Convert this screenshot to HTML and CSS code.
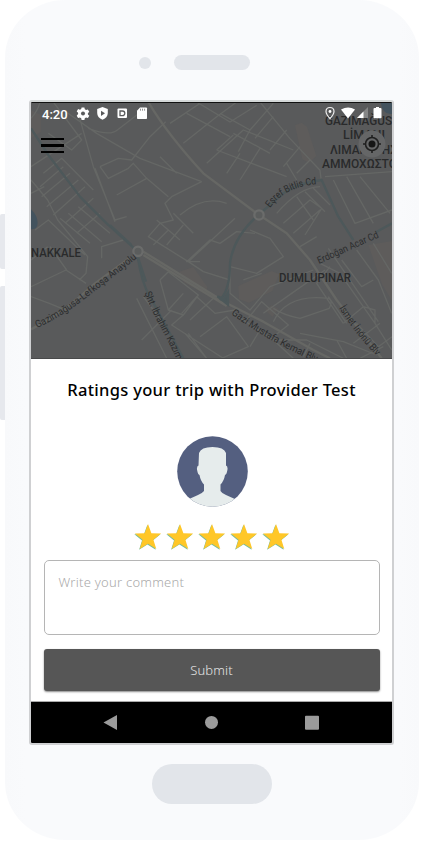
FILE: index.html
```html
<!DOCTYPE html>
<html lang="en">
<head>
<meta charset="utf-8">
<title>Rate your trip</title>
<link rel="stylesheet" href="styles.css">
</head>
<body>
<div class="stage">
  <div class="side-keys"><i class="key key-short"></i><i class="key key-long"></i></div>
  <main class="phone">
    <div class="earpiece"><i class="camera"></i><i class="speaker"></i></div>
    <div class="screen">
      <section class="map">
        <svg class="map-art" viewBox="31 103 361 256">
          <rect x="31" y="102" width="361" height="257" fill="#595a5b"/>
          <g transform="scale(.33333)">
            <g fill="#5e5c5b">
              <path d="M885 376l20-8 16 12 28 88-22 20-20-10z"/>
              <path d="M715 858l100-45 22 10-20 50-70 35-30-10z"/>
              <path d="M538 815l42-14 42 60-6 22-65-36z"/>
              <path d="M1105 735l71-12v180l-30-50z"/>
              <path d="M795 930l20-14 20 10-18 24z"/>
              <path d="M93 330l30 15v50l-30 20z"/>
            </g>
            <path d="M93 628q20 20 20 40 0 20-20 20zM1142 306h34v36q-28 4-34-36z" fill="#43535e"/>
            <g class="road">
              <path d="M93 355Q115 330 120 306M160 306L245 420 215 450 145 400M93 500L245 400M235 340L280 500 345 660 380 650M190 330L290 400 420 475 605 545M265 385Q330 410 352 390L430 330M300 500L355 475 395 480 450 410 497 365M300 500l25 35 60-30 15-15 40 45-90 50M440 535l65 55M480 470l50 50M345 665l-60-160"/>
              <path d="M93 540l50 60 30 60 90 110-5 50-20 20M130 520l55-45 95 95M120 560l70-60M125 590l85-70M140 620l95-80M160 645l95-85M195 670l85-75M230 700l70-60M93 580l40-20M105 690l40-30 110 105M180 655l90 75M205 640l100 85M235 620l95 80M305 775v-35l65-20M93 780l50-40M93 860l105-50 60 40M93 890l55 20 60 25M150 740l50 70"/>
              <path d="M510 370l90-60M550 430l100-80 60-44M560 340l130 70M590 306l100 60 80-50M620 490l110-100 150 60M650 450l210 80M680 520l40-60M720 540l60-95M660 340l90 50 70-80M750 390l-35 65M780 306l90 110 90 95 3 25M820 350l-55 65M860 390l-50 60M900 440l-50 60M930 480l-40 40M860 490l30 50M700 405l-50 45M700 400l110 60"/>
              <path d="M605 545l-90 45-20 20 25 50-40 10-35 40 120 75 140-130M470 660l70 60M520 640l60 60M505 690l-45 45M550 675l-50 60M600 785l-40 0 70-65 30 10 50-35 55 5M565 785l45 30 80 25M540 645q70-60 140-35"/>
              <path d="M480 840l25-25 90 70-45 60-45-15-25-90M505 930l45-50M545 940l45-50 55 50 60-10M550 945l-35 30 155 100M515 930l-90 90M570 960l70-65M600 1010l80-60 65 90-80 35M620 1075l-55-75M555 1000l65 75M410 895l90 180M430 890l60 80"/>
              <path d="M690 800l80 20 80-50-40-55-60-25M690 800v80l60 50 60-70 130-50M730 840l55-20M740 960l45-55 80 70-45 35M790 940l85-60 100-70M820 965Q860 880 985 895 1000 900 988 925L900 955Q850 945 820 925M985 890l55 80M990 800l-40 50 80 120M700 940l120 80 100 0 110 55M820 1020l60 55M900 1000l130 25 100 40M930 1030l-20 40M780 990l-30 50"/>
              <path d="M830 640q70-80 130-80M850 670l80-70 35 25-50 80M880 700l80-70M890 590l50 70M915 575l60 60M940 565l50 50M900 740l50-30M975 530l201-15M1000 540l65 130 111-40M1040 530l80 140M1080 530l90 110M960 790l60 30 105 150 50 80M985 745l150 220M1025 780l60 80 35-20M1070 750l65 90 40 100M1120 730l55 90M1030 970l60-50 35 10 0 40M1070 970l65 70 41-30M1010 1020l30 55M1060 1030l80-60M1150 1040l-70 35"/>
            </g>
            <g class="road-main">
              <path d="M93 988Q190 940 285 850L390 773M430 755L600 860 680 910 790 965 940 1050 990 1075M430 765L680 918"/>
              <path d="M445 306Q500 400 610 520L770 640 860 700 930 780 1010 900 1110 1030 1145 1075"/>
            </g>
            <g class="green-road">
              <path d="M93 385L145 465 240 590 320 670 410 752M413 770Q425 850 450 890L550 1075"/>
              <path d="M660 900Q690 870 690 790 700 710 775 645L850 580Q890 550 965 540L1015 650 1060 720M1130 695l46-25"/>
            </g>
            <path d="M652 889l20 9 12-20v36zM395 735l-65-60M413 770l25 75" fill="#4d585a" stroke="#4d585a" stroke-width="7"/>
            <circle cx="414" cy="754" r="14" class="roundabout"/>
            <circle cx="777" cy="645" r="14" class="roundabout"/>
          </g>
          <g class="place">
            <text x="31" y="257" textLength="50" lengthAdjust="spacingAndGlyphs">NAKKALE</text>
            <text x="279" y="282" textLength="72" lengthAdjust="spacingAndGlyphs">DUMLUPINAR</text>
            <text x="325" y="124.500" textLength="67" lengthAdjust="spacingAndGlyphs">GAZİMAĞUS</text>
            <text x="343" y="139" textLength="42" lengthAdjust="spacingAndGlyphs">LİMANI</text>
            <text x="330" y="153.500" textLength="67" lengthAdjust="spacingAndGlyphs">ΛΙΜΑΝΙ ΤΗΣ</text>
            <text x="322" y="167.500" textLength="75" lengthAdjust="spacingAndGlyphs">ΑΜΜΟΧΩΣΤΟ</text>
          </g>
          <defs>
            <path id="p1" d="M37 328Q62 317 90 295T140 256"/>
            <path id="p2" d="M144.500 293Q153 314 163 332T181 370"/>
            <path id="p3" d="M231 314Q260 335 288 349T332 368"/>
            <path id="p4" d="M270 208Q287 184 325 184"/>
            <path id="p5" d="M319 264L384 235"/>
            <path id="p6" d="M339 308Q355 334 383 363"/>
          </defs>
          <g class="street">
            <text><textPath href="#p1" textLength="122" lengthAdjust="spacingAndGlyphs">Gazimağusa-Lefkoşa Anayolu</textPath></text>
            <text><textPath href="#p2" textLength="75" lengthAdjust="spacingAndGlyphs">Şht. İbrahim Kazım</textPath></text>
            <text><textPath href="#p3" textLength="98" lengthAdjust="spacingAndGlyphs">Gazi Mustafa Kemal Blv</textPath></text>
            <text><textPath href="#p4" textLength="54" lengthAdjust="spacingAndGlyphs">Eşref Bitlis Cd</textPath></text>
            <text><textPath href="#p5" textLength="66" lengthAdjust="spacingAndGlyphs">Erdoğan Acar Cd</textPath></text>
            <text><textPath href="#p6" textLength="61" lengthAdjust="spacingAndGlyphs">İsmet İnönü Blv</textPath></text>
          </g>
        </svg>
        <div class="overlay">
          <div class="status">
            <span class="time">4:20</span>
            <svg class="left-icons" viewBox="76 106 72 15" fill="#fff">
              <g transform="translate(83 113.4)"><path d="M-1.400-5.800h2.800l.4 1.700 1.300.8 1.800-.6 1.400 2.400-1.400 1.200v1.400l1.400 1.200-1.400 2.400-1.800-.6-1.300.8-.4 1.700h-2.800l-.4-1.700-1.300-.8-1.800.6-1.400-2.400L-4.900.7V-.7l-1.400-1.200 1.400-2.400 1.800.6 1.300-.8z"/><circle r="2" fill="#595a5b"/></g>
              <path d="M102.500 107l5.300 2v4q0 4.500-5.300 6.700-5.300-2.200-5.300-6.700v-4z"/><path d="M101 110.700l4 2.600-4 2.600z" fill="#595a5b"/>
              <rect x="117.500" y="108.500" width="9.500" height="9.500" rx="1"/><path d="M120 111h2.500a2.300 2.300 0 0 1 0 4.600H120z" fill="none" stroke="#595a5b" stroke-width="1.300"/>
              <path d="M140 107.500h6.200q.8 0 .8.800v10q0 .8-.8.800h-8.400q-.8 0-.8-.8v-7.500z"/><path d="M140.500 108.700v2M142.500 108.700v2M144.600 108.700v2" stroke="#777" stroke-width=".8"/>
            </svg>
            <svg class="right-icons" viewBox="325 106 58 15">
              <path d="M330 107.500c2.500 0 4 1.700 4 4 0 2.700-4 7-4 7s-4-4.300-4-7c0-2.300 1.500-4 4-4z" fill="none" stroke="#eee" stroke-width="1.200"/><circle cx="330" cy="111.500" r="1.400" fill="#fff"/>
              <path d="M341 109.500q7.300-4 14 0l-7 9z" fill="#fff"/>
              <path d="M368 107v11h-11z" fill="#858686"/><path d="M363.500 111.500v6.500H357z" fill="#fff"/>
              <path d="M376 107h3v1h1.500q1 0 1 1v8.500q0 .8-1 .8h-6q-1 0-1-.8V109q0-1 1-1h1.500z" fill="#fff"/>
            </svg>
          </div>
          <div class="tools">
            <div class="menu"><i></i><i></i><i></i></div>
            <svg class="locate" viewBox="0 0 28 28"><circle cx="14" cy="14" r="13.500" fill="#656667"/><g fill="none" stroke="#202020" stroke-width="1.600"><circle cx="14" cy="14" r="6.500"/><path d="M14 5v3M14 20v3M5 14h3M20 14h3"/></g><circle cx="14" cy="14" r="3.500" fill="#161616"/></svg>
          </div>
        </div>
      </section>
      <section class="sheet">
        <h1>Ratings your trip with Provider Test</h1>
        <svg class="avatar" viewBox="0 0 71 71"><defs><clipPath id="disc"><circle cx="35.500" cy="35.500" r="35.300"/></clipPath></defs><g clip-path="url(#disc)"><rect width="71" height="71" fill="#545f80"/><path d="M22 17Q24 11 35.500 11T49 17v12.500q2.200 1 1.300 5-.7 4-2.300 4.500-1 6-4.500 9.500v6.500q1 2 5.500 4l10 4.500v9H11v-9l10-4.500q4.500-2 6-4V48.500q-3.500-3.500-4.500-9.500-1.600-.5-2.300-4.500-.9-4 1.300-5z" fill="#e6ecec"/></g></svg>
        <svg class="stars" viewBox="0 0 156 28">
          <defs><path id="star" d="M14 1l3.400 9.300 9.700.3-7.700 6.100 2.900 9.300L14 20.700 5.700 26l2.900-9.300-7.700-6.100 9.700-.3z"/></defs>
          <g fill="#79bc9b" transform="translate(-.6 .7)"><use href="#star"/><use href="#star" x="32"/><use href="#star" x="64"/><use href="#star" x="96"/><use href="#star" x="128"/></g>
          <g fill="#ffc728"><use href="#star"/><use href="#star" x="32"/><use href="#star" x="64"/><use href="#star" x="96"/><use href="#star" x="128"/></g>
        </svg>
        <div class="comment"><span>Write your comment</span></div>
        <div class="submit"><span>Submit</span></div>
      </section>
      <nav class="navbar">
        <svg viewBox="0 0 361 41" fill="#9b9b9b"><path d="M72.500 20.500l13.500-7.500v15z"/><circle cx="180.500" cy="20.400" r="6.500"/><rect x="274" y="13.700" width="14" height="14" rx="1"/></svg>
      </nav>
    </div>
    <div class="home"></div>
  </main>
</div>
</body>
</html>
```
FILE: styles.css
```css
* { box-sizing: border-box; }
body { margin: 0; background: #fff; font-family: "Noto Sans", sans-serif; }
.stage { display: flex; width: 423px; height: 841px; overflow: hidden; }
.side-keys { width: 5px; flex: none; padding-top: 214px; display: flex; flex-direction: column; gap: 17px; }
.key { background: #e6e8ed; border-radius: 2px 0 0 2px; }
.key-short { height: 55px; }
.key-long { height: 134px; }
.phone { width: 414px; height: 840px; flex: none; padding: 54px 0 0 24px; border-radius: 60px / 58px; background: linear-gradient(90deg, #f8f9fb, #f9fafc 20px, #f9fafc 394px, #f8f9fb); }
.earpiece { display: flex; align-items: center; height: 17px; padding-left: 110px; gap: 23px; }
.camera { width: 12px; height: 12px; border-radius: 50%; background: #e2e5ea; }
.speaker { width: 76px; height: 15px; border-radius: 8px; background: #e2e5ea; }
.screen { width: 365px; height: 645px; margin-top: 29px; border: 2px solid #cfd0d2; border-top-color: #d4d8d8; border-radius: 3px; overflow: hidden; background: #fff; }
.map { position: relative; height: 257px; border-top: 1px solid #111; border-bottom: 1px solid #48494a; overflow: hidden; }
.map-art { display: block; width: 361px; height: 256px; }
.road { fill: none; stroke: #656765; stroke-width: 4; stroke-linejoin: round; }
.road-main { fill: none; stroke: #666764; stroke-width: 7; stroke-linejoin: round; }
.green-road { fill: none; stroke: #4d585a; stroke-width: 7; stroke-linejoin: round; }
.roundabout { fill: #5b5d5d; stroke: #6b6c6b; stroke-width: 7; }
.place { font: 500 12.5px Roboto, sans-serif; fill: #292a2b; }
.street { font: 400 10px Roboto, sans-serif; fill: #2c2d2e; }
.overlay { position: absolute; inset: 0; }
.status { display: flex; height: 22px; padding: 3px 9px 0 11px; }
.time { width: 34px; font: 500 13px/17px Roboto, sans-serif; color: #fff; }
.left-icons { width: 72px; height: 15px; }
.right-icons { width: 58px; height: 15px; margin-left: auto; }
.tools { display: flex; justify-content: space-between; padding: 5px 6px 0 10px; }
.menu { width: 23px; padding-top: 8px; display: flex; flex-direction: column; gap: 4px; }
.menu i { height: 2.4px; background: #000; }
.locate { width: 28px; height: 28px; }
.sheet { height: 343px; padding: 19px 13px 0; display: flex; flex-direction: column; align-items: center; border-bottom: 1px solid #aaa; }
h1 { margin: 0; font: 500 16.5px/24px "Noto Sans", sans-serif; letter-spacing: .31px; color: #000; white-space: nowrap; }
.avatar { width: 71px; height: 71px; margin: 34px 0 0 1px; flex: none; }
.stars { width: 156px; height: 28px; margin-top: 16px; flex: none; }
.comment { width: 336px; height: 75px; flex: none; margin-top: 9px; border: 1px solid #b5b5b5; border-radius: 5px; padding: 11px 14px; font: 300 13px/20px "Noto Sans", sans-serif; letter-spacing: .25px; color: #aaa; }
.submit { width: 336px; height: 42px; flex: none; margin-top: 14px; border-radius: 3px; background: #565656; box-shadow: 0 1px 2px #888; display: flex; align-items: center; justify-content: center; font: 300 13px/20px "Noto Sans", sans-serif; letter-spacing: .15px; color: #e4e4e4; }
.navbar { height: 41px; background: #000; }
.navbar svg { display: block; width: 361px; height: 41px; }
.home { width: 120px; height: 40px; border-radius: 20px; margin: 19px 0 0 123px; background: #e2e5ea; }
```
